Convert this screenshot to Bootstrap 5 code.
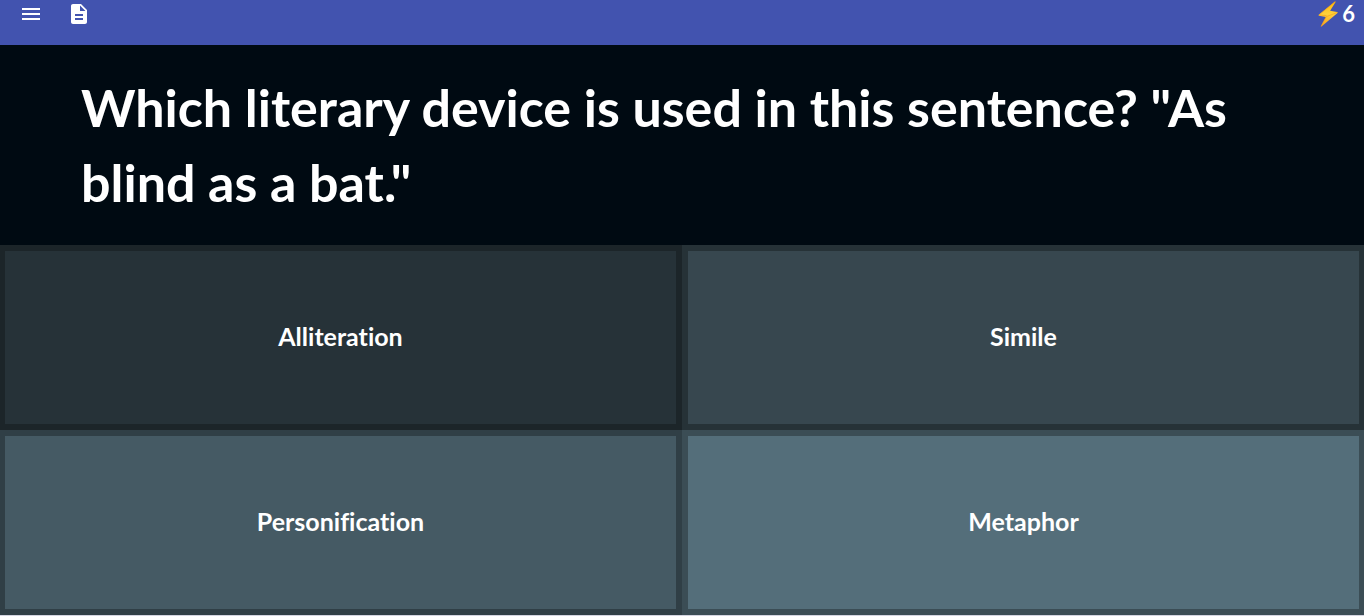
<!DOCTYPE html>
<html lang="en">
<head>
<meta charset="utf-8">
<meta name="viewport" content="width=device-width, initial-scale=1">
<title>Question</title>
<link href="https://cdn.jsdelivr.net/npm/bootstrap@5.3.0/dist/css/bootstrap.min.css" rel="stylesheet">
<style>
body { font-family: Lato, "Open Sans", sans-serif; background: #d3d4e0; color: #fff; }
.topbar { background: #4253af; height: 45px; padding: 0 9px 17px 19px; }
.topbar svg { display: block; }
.energy { font-size: 22px; line-height: 28px; }
.question { background: #000a12; min-height: 200px; padding: 0 81px; }
.question h1 { font-size: 52px; line-height: 75px; }
.answer { border: 6px solid; border-left-width: 5px; padding: 0 6px 4px; font-size: 25px; line-height: 38px; font-variant-ligatures: none; min-height: 120px; color: #fff; }
.answer.right-side { border-left-width: 6px; border-right-width: 5px; }
.tone-1 { background: #263238; border-color: #1c2529; }
.tone-2 { background: #37474f; border-color: #263237; }
.tone-3 { background: #455a64; border-color: #303f46; }
.tone-4 { background: #546e7a; border-color: #3b4d55; }
.base-line { border-bottom: 1px solid #d3d4e0; }
</style>
</head>
<body>
<div class="d-flex flex-column min-vh-100 base-line">
  <header class="topbar d-flex justify-content-between align-items-center">
    <div class="d-flex gap-4">
      <button type="button" class="btn p-0 border-0 text-white" aria-label="Menu">
        <svg width="24" height="24" viewBox="0 0 24 24" fill="currentColor"><path d="M3 18h18v-2H3v2zm0-5h18v-2H3v2zm0-7v2h18V6H3z"/></svg>
      </button>
      <button type="button" class="btn p-0 border-0 text-white" aria-label="Notes">
        <svg width="24" height="24" viewBox="0 0 24 24" fill="currentColor"><path d="M14 2H6c-1.100 0-2 .9-2 2v16c0 1.100.9 2 2 2h12c1.100 0 2-.9 2-2V8l-6-6zm2 16H8v-2h8v2zm0-4H8v-2h8v2zm-3-5V3.500L18.500 9H13z"/></svg>
      </button>
    </div>
    <div class="energy d-flex align-items-center gap-1 fw-bold">
      <svg width="20" height="26" viewBox="0 0 20 26" aria-hidden="true">
        <defs><linearGradient id="bolt" x1="0" y1="0" x2="0" y2="1"><stop offset="0" stop-color="#feb804"/><stop offset=".5" stop-color="#ffd13c"/><stop offset="1" stop-color="#f9a01c"/></linearGradient></defs>
        <path d="M17 .5.700 13.700q-.5.800.4 1l6.800 1.300-5 9.300q.1.500.6.200L19.500 12q.3-.8-.4-1l-7-1.200L17.600 1q0-.8-.6-.5z" fill="url(#bolt)"/>
        <path d="M17.300.5 1 14l7.500.6M19.500 11.400 8.200 15.700 3 25.400" fill="none" stroke="#f59b16" stroke-width=".8" opacity=".7"/>
      </svg>
      <span>6</span>
    </div>
  </header>
  <main class="d-flex flex-column flex-grow-1">
    <section class="question d-flex align-items-center">
      <h1 class="fw-bold m-0">Which literary device is used in this sentence? "As blind as a bat."</h1>
    </section>
    <div class="row g-0 flex-grow-1">
      <div class="col-6 d-flex"><button type="button" class="answer tone-1 fw-bold w-100">Alliteration</button></div>
      <div class="col-6 d-flex"><button type="button" class="answer right-side tone-2 fw-bold w-100">Simile</button></div>
      <div class="col-6 d-flex"><button type="button" class="answer tone-3 fw-bold w-100">Personification</button></div>
      <div class="col-6 d-flex"><button type="button" class="answer right-side tone-4 fw-bold w-100">Metaphor</button></div>
    </div>
  </main>
</div>
<script src="https://cdn.jsdelivr.net/npm/bootstrap@5.3.0/dist/js/bootstrap.bundle.min.js"></script>
</body>
</html>
